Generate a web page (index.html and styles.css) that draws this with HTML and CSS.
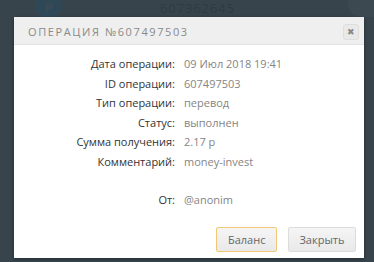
FILE: index.html
```html
<!DOCTYPE html>
<html>
<head>
<meta charset="utf-8">
<link rel="stylesheet" href="styles.css">
</head>
<body>
<div class="page">
  <div class="bg-row">
    <div class="bg-avatar"><span class="bg-p">P</span></div>
    <div class="bg-num">607362645</div>
    <div class="bg-check"></div>
  </div>
</div>
<div class="modal">
  <div class="modal-head">
    <div class="modal-title">ОПЕРАЦИЯ №607497503</div>
    <div class="close">&#x2716;</div>
  </div>
  <div class="modal-body">
    <div class="rows">
      <div class="lbl">Дата операции:</div><div class="val">09 Июл 2018 19:41</div>
      <div class="lbl">ID операции:</div><div class="val">607497503</div>
      <div class="lbl">Тип операции:</div><div class="val">перевод</div>
      <div class="lbl">Статус:</div><div class="val">выполнен</div>
      <div class="lbl">Сумма получения:</div><div class="val">2.17 р</div>
      <div class="lbl">Комментарий:</div><div class="val">money-invest</div>
      <div class="lbl gap">От:</div><div class="val gap">@anonim</div>
    </div>
    <div class="actions">
      <div class="btn btn-primary">Баланс</div>
      <div class="btn">Закрыть</div>
    </div>
  </div>
</div>
</body>
</html>
```
FILE: styles.css
```css
html, body {
  margin: 0;
  padding: 0;
  width: 374px;
  height: 262px;
  overflow: hidden;
  background: #37444c;
  font-family: "Open Sans", "Noto Sans", sans-serif;
}
.page {
  height: 262px;
}
.bg-row {
  display: flex;
  align-items: flex-start;
  padding-left: 35px;
}
.bg-avatar {
  width: 27px;
  height: 18px;
  border-radius: 0 0 14px 14px;
  background: #2f4858;
  display: flex;
  justify-content: center;
  align-items: flex-start;
}
.bg-p {
  color: #3b4a53;
  font-weight: 700;
  font-size: 13px;
  line-height: 13px;
  margin-top: 1px;
}
.bg-num {
  margin-left: 98px;
  margin-top: 2px;
  color: #2f3b42;
  font-size: 13px;
  line-height: 13px;
  letter-spacing: 0.9px;
}
.bg-check {
  margin-left: auto;
  width: 26px;
  height: 17px;
  border-radius: 0 0 0 13px;
  background: #3c4950;
}
.modal {
  position: absolute;
  left: 14px;
  top: 17px;
  width: 350px;
  height: 241px;
  background: #fff;
  box-shadow: 0 1px 3px rgba(0,0,0,0.4);
  display: flex;
  flex-direction: column;
}
.modal-head {
  height: 27px;
  background: #efefef;
  border-bottom: 1px solid #e2e2e2;
  display: flex;
  align-items: center;
  padding: 0 5px 0 14px;
}
.modal-title {
  color: #8a8a8a;
  font-size: 11px;
  letter-spacing: 1.6px;
  font-weight: 400;
  margin-top: 1px;
}
.close {
  margin-left: auto;
  width: 14px;
  height: 14px;
  border: 1px solid #dedede;
  border-radius: 3px;
  background: #e9e9e9;
  color: #888;
  font-size: 9px;
  display: flex;
  align-items: center;
  justify-content: center;
  margin-top: 2px;
}
.modal-body {
  flex: 1;
  display: flex;
  flex-direction: column;
  padding: 11px 8px 6px 0;
}
.rows {
  display: grid;
  grid-template-columns: 161px 1fr;
  column-gap: 9px;
  row-gap: 4.5px;
  font-size: 11px;
  line-height: 15px;
}
.lbl {
  text-align: right;
  color: #333;
}
.val {
  color: #858585;
}
.gap {
  margin-top: 19px;
}
.actions {
  margin-top: auto;
  display: flex;
  justify-content: flex-end;
  gap: 11px;
}
.btn {
  height: 25px;
  padding: 0 10.5px;
  border: 1px solid #dcdcdc;
  border-radius: 2px;
  box-sizing: border-box;
  background: linear-gradient(#f5f5f5, #e9e9e9);
  color: #666;
  font-size: 11px;
  display: flex;
  align-items: center;
}
.btn-primary {
  border-color: #f0c878;
}
```
